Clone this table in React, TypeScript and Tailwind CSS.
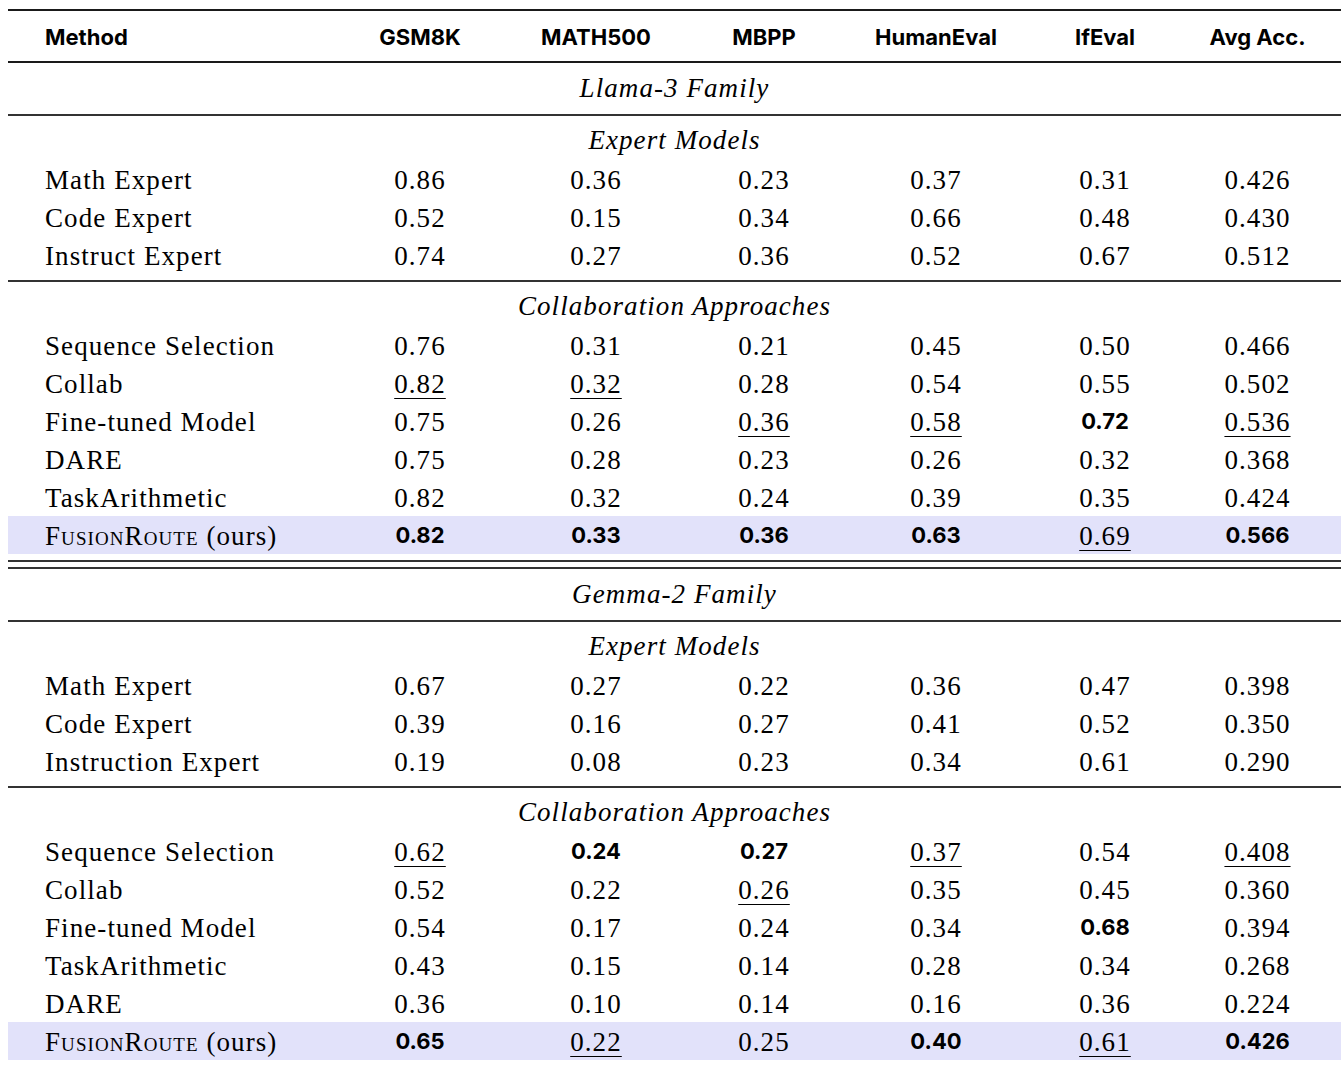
import React from 'react';

type Cell = { v: string; s?: 'b' | 'u' };
type Row = { name: string; ours?: boolean; cells: Cell[] };
type Group = { title: string; rows: Row[] };
type Family = { title: string; groups: Group[] };

const c = (spec: string): Cell[] =>
  spec.split(' ').map((t) => {
    if (t.startsWith('b')) return { v: t.slice(1), s: 'b' };
    if (t.startsWith('u')) return { v: t.slice(1), s: 'u' };
    return { v: t };
  });

const families: Family[] = [
  {
    title: 'Llama-3 Family',
    groups: [
      {
        title: 'Expert Models',
        rows: [
          { name: 'Math Expert', cells: c('0.86 0.36 0.23 0.37 0.31 0.426') },
          { name: 'Code Expert', cells: c('0.52 0.15 0.34 0.66 0.48 0.430') },
          { name: 'Instruct Expert', cells: c('0.74 0.27 0.36 0.52 0.67 0.512') },
        ],
      },
      {
        title: 'Collaboration Approaches',
        rows: [
          { name: 'Sequence Selection', cells: c('0.76 0.31 0.21 0.45 0.50 0.466') },
          { name: 'Collab', cells: c('u0.82 u0.32 0.28 0.54 0.55 0.502') },
          { name: 'Fine-tuned Model', cells: c('0.75 0.26 u0.36 u0.58 b0.72 u0.536') },
          { name: 'DARE', cells: c('0.75 0.28 0.23 0.26 0.32 0.368') },
          { name: 'TaskArithmetic', cells: c('0.82 0.32 0.24 0.39 0.35 0.424') },
          { name: 'FusionRoute', ours: true, cells: c('b0.82 b0.33 b0.36 b0.63 u0.69 b0.566') },
        ],
      },
    ],
  },
  {
    title: 'Gemma-2 Family',
    groups: [
      {
        title: 'Expert Models',
        rows: [
          { name: 'Math Expert', cells: c('0.67 0.27 0.22 0.36 0.47 0.398') },
          { name: 'Code Expert', cells: c('0.39 0.16 0.27 0.41 0.52 0.350') },
          { name: 'Instruction Expert', cells: c('0.19 0.08 0.23 0.34 0.61 0.290') },
        ],
      },
      {
        title: 'Collaboration Approaches',
        rows: [
          { name: 'Sequence Selection', cells: c('u0.62 b0.24 b0.27 u0.37 0.54 u0.408') },
          { name: 'Collab', cells: c('0.52 0.22 u0.26 0.35 0.45 0.360') },
          { name: 'Fine-tuned Model', cells: c('0.54 0.17 0.24 0.34 b0.68 0.394') },
          { name: 'TaskArithmetic', cells: c('0.43 0.15 0.14 0.28 0.34 0.268') },
          { name: 'DARE', cells: c('0.36 0.10 0.14 0.16 0.36 0.224') },
          { name: 'FusionRoute', ours: true, cells: c('b0.65 u0.22 0.25 b0.40 u0.61 b0.426') },
        ],
      },
    ],
  },
];

const columns = ['GSM8K', 'MATH500', 'MBPP', 'HumanEval', 'IfEval', 'Avg Acc.'];

const grid = 'grid grid-cols-[332px_160px_192px_144px_200px_138px_1fr] items-center';
const sans = "font-['Inter','Liberation_Sans',sans-serif]";
const serif = "font-['Liberation_Serif',serif] tracking-[0.04em]";

function Rule({ thick }: { thick?: boolean }) {
  return <div className={thick ? 'h-[2px] bg-[#1a1a1a]' : 'h-[2px] bg-[#333]'} />;
}

function ValueCell({ cell }: { cell: Cell }) {
  if (cell.s === 'b') {
    return <div className={`text-center text-[22px] font-bold text-black ${sans}`}>{cell.v}</div>;
  }
  return (
    <div className={`text-center text-[27px] text-black ${serif}`}>
      <span className={cell.s === 'u' ? 'underline decoration-1 underline-offset-[5px]' : ''}>{cell.v}</span>
    </div>
  );
}

function DataRow({ row }: { row: Row }) {
  return (
    <div className={`${grid} h-[38px] ${row.ours ? 'bg-[#e2e2fa]' : ''}`}>
      <div className={`pl-[37px] text-[27px] text-black ${serif}`}>
        {row.ours ? (
          <>
            <span className="[font-variant:small-caps]">FusionRoute</span> (ours)
          </>
        ) : (
          row.name
        )}
      </div>
      {row.cells.map((cell, i) => (
        <ValueCell key={i} cell={cell} />
      ))}
    </div>
  );
}

function Caption({ text }: { text: string }) {
  return (
    <div className={`flex h-[38px] items-center justify-center text-[27px] italic text-black ${serif}`}>{text}</div>
  );
}

export default function App() {
  return (
    <div className="min-h-screen bg-white pt-[9px] pl-[8px]">
      <Rule thick />
      <div className={`${grid} mt-[7px] h-[38px] text-[22px] font-bold text-black ${sans}`}>
        <div className="pl-[37px]">Method</div>
        {columns.map((col) => (
          <div key={col} className="text-center">
            {col}
          </div>
        ))}
      </div>
      <div className="mt-[5px] h-[1.5px] bg-[#1a1a1a]" />
      {families.map((fam, fi) => (
        <div key={fam.title}>
          <div className="mt-[7px]">
            <Caption text={fam.title} />
          </div>
          {fam.groups.map((g) => (
            <div key={g.title}>
              <div className="mt-[6px]">
                <Rule />
              </div>
              <div className="mt-[6px]">
                <Caption text={g.title} />
                {g.rows.map((r, ri) => (
                  <DataRow key={ri} row={r} />
                ))}
              </div>
            </div>
          ))}
          {fi === 0 && (
            <div className="mt-[6px] flex flex-col gap-[5px]">
              <Rule />
              <Rule />
            </div>
          )}
        </div>
      ))}
    </div>
  );
}
